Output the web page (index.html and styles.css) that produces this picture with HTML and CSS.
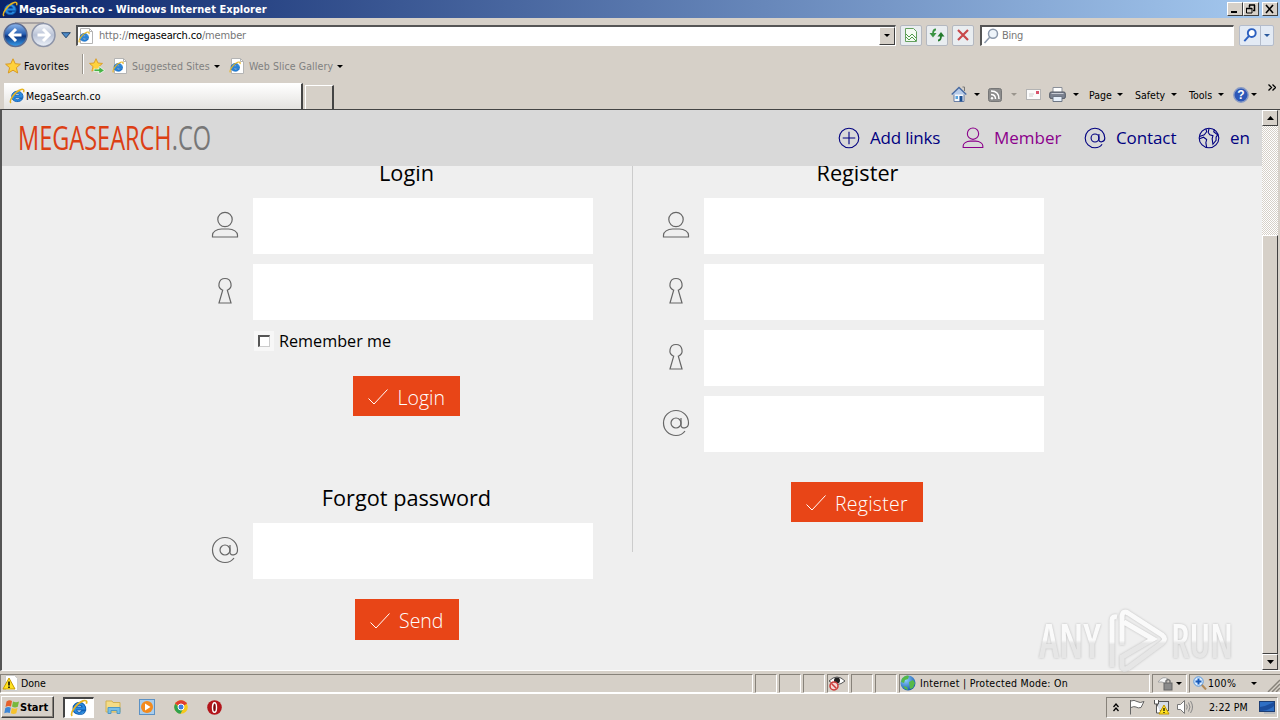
FILE: index.html
```html
<!DOCTYPE html>
<html lang="en">
<head>
  <meta charset="UTF-8">
  <title>MegaSearch.co</title>
  <link rel="stylesheet" href="styles.css">
</head>
<body>

  <!-- shared icons -->
  <svg class="defs" width="0" height="0">
    <defs>
      <linearGradient id="gBack" x1="0" y1="0" x2="0" y2="1"><stop offset="0" stop-color="#8fb9ee"/><stop offset=".45" stop-color="#2b62b4"/><stop offset=".55" stop-color="#0d3580"/><stop offset="1" stop-color="#38a0f0"/></linearGradient>
      <linearGradient id="gFwd" x1="0" y1="0" x2="0" y2="1"><stop offset="0" stop-color="#f4f6fa"/><stop offset=".5" stop-color="#b9c2d6"/><stop offset="1" stop-color="#eef3fa"/></linearGradient>
      <radialGradient id="gGlobe" cx=".35" cy=".3" r=".8"><stop offset="0" stop-color="#8fd0ff"/><stop offset="1" stop-color="#0b4fa8"/></radialGradient>
      <linearGradient id="gMark" x1="0" y1="0" x2="0" y2="1"><stop offset=".5" stop-color="#fafafa"/><stop offset=".55" stop-color="#e6e6e6"/></linearGradient>
    </defs>
    <symbol id="ie" viewBox="0 0 16 16">
      <path d="M14 9.800H5.800c.4 2.200 3.600 2.600 4.700.7h3.200c-1.600 4.600-11.200 4.300-11-2.200C2.900 1.500 14.600 1 14 9.800zM5.800 7.200h4.900c-.2-2.200-4.600-2.200-4.900 0z" fill="#2a8be0" stroke="#0f5fb4" stroke-width=".9"/>
      <path d="M2 15c-2.500-2 3.500-11 9.500-13.300C14 .8 15.600 1.600 14.500 4.200" fill="none" stroke="#e6b422" stroke-width="1.500"/>
    </symbol>
    <symbol id="iepage" viewBox="0 0 16 16">
      <path d="M2.500.5h9l3 3v12h-12z" fill="#fff" stroke="#b4b4b4"/>
      <path d="M11.500.5v3h3" fill="none" stroke="#b4b4b4"/>
      <svg x="0" y="3" width="12" height="12"><use href="#ie"/></svg>
    </symbol>
    <symbol id="star" viewBox="0 0 16 16">
      <path d="M8 .8l2.200 4.900 5.200.5-4 3.500 1.300 5.300L8 12.200 3.300 15l1.300-5.300-4-3.500 5.200-.5z" fill="#ffd23c" stroke="#d99a22"/>
    </symbol>
    <symbol id="down" viewBox="0 0 6 3"><path d="M0 0h6L3 3z" fill="currentColor"/></symbol>
    <symbol id="user" viewBox="0 0 28 28">
      <circle cx="14" cy="8.500" r="7.200"/><path d="M1.500 26v-2c0-3 4-6 9-6h7c5 0 9 3 9 6v2z"/>
    </symbol>
    <symbol id="key" viewBox="0 0 28 28">
      <path d="M11.700 13.200C5.500 10.500 7.500 1.500 14 1.500s8.500 9 2.300 11.700L20 26H8z"/>
    </symbol>
    <symbol id="at" viewBox="0 0 28 28">
      <circle cx="14" cy="14" r="5"/><path d="M19 9v7.500c0 3.500 7.500 3.500 7.500-2.500C26.500 7 21 1.500 14 1.500S1.500 7 1.500 14 7 26.500 14 26.500c4 0 7-1.500 9-4.500"/>
    </symbol>
    <symbol id="plus" viewBox="0 0 28 28">
      <circle cx="14" cy="14" r="12.500"/><path d="M14 6v16M6 14h16"/>
    </symbol>
    <symbol id="globe" viewBox="0 0 28 28">
      <circle cx="14" cy="14" r="12.500"/><path d="M10 2.500l1 3.500-3 4-6 2M2 15l5-2 4 3-1 4 1 6M14 2l-1 5 2 3 4 1-1 4 1 7 4-5v-4l2-3-5-4 1-3"/>
    </symbol>
    <symbol id="check" viewBox="0 0 20 16"><path d="M.5 9.500L6 15 19.500.5"/></symbol>
    <symbol id="lens" viewBox="0 0 16 16"><circle cx="10" cy="5.800" r="4.500"/><path d="M6.700 9.300L1.500 15"/></symbol>
  </svg>

  <div class="titlebar">
    <svg class="i16"><use href="#ie"/></svg>
    <span class="title">MegaSearch.co - Windows Internet Explorer</span>
    <div class="winbtns">
      <b><svg width="12" height="10"><path d="M2 8h6" stroke="#000" stroke-width="2"/></svg></b>
      <b><svg width="12" height="10"><path d="M4 1h6M4.500 1v2.500M9.500 1v5.500H8M1 4.500h6" stroke="#000" stroke-width="1.500" fill="none"/><path d="M1.500 4v5h5.500V4" stroke="#000" fill="none"/></svg></b>
      <b class="close"><svg width="12" height="10"><path d="M2 1l7 8M9 1L2 9" stroke="#000" stroke-width="1.600"/></svg></b>
    </div>
  </div>

  <div class="navbar">
    <svg class="arrows" width="56" height="28" viewBox="0 0 56 28">
      <path d="M14 2h29" stroke="#a9a4a4" stroke-width="2"/>
      <circle cx="14.500" cy="14" r="11.500" fill="url(#gBack)" stroke="#5c6c92" stroke-width="1.500"/>
      <path d="M15 8L9 14l6 6M10 14h10.500" stroke="#fff" stroke-width="3" fill="none"/>
      <circle cx="42.500" cy="14" r="11.500" fill="url(#gFwd)" stroke="#8d94a8" stroke-width="1.500"/>
      <path d="M42 8l6 6-6 6M47 14H36.500" stroke="#fff" stroke-width="3" fill="none"/>
    </svg>
    <svg class="recent" width="10" height="7"><path d="M.7.7h8.600L5 5.800z" fill="#4d8ac8" stroke="#21456f"/></svg>
    <div class="address">
      <svg class="i16"><use href="#iepage"/></svg>
      <span class="url">http://<em>megasearch.co</em>/member</span>
      <i class="drop"><svg class="arr"><use href="#down"/></svg></i>
    </div>
    <div class="tool"><svg width="14" height="16" viewBox="0 0 14 16"><path d="M1.500 1.500h8l3 3v10h-11z" fill="#f4fbf2" stroke="#64a05e"/><path d="M2 7l3 3 3-3 4 4M2 10l3 3 3-3 4 4" stroke="#4f9b4a" fill="none"/></svg></div>
    <div class="tool"><svg width="16" height="14" viewBox="0 0 16 14"><path d="M7 1.500C4.500 1.500 4 3 4 6" stroke="#3c9444" stroke-width="1.800" fill="none"/><path d="M.5 5h7L4 9.500z" fill="#3c9444"/><path d="M9 12.500c2.500 0 3-1.500 3-4.500" stroke="#237a2c" stroke-width="1.800" fill="none"/><path d="M8.500 8.500h7L12 4z" fill="#237a2c"/></svg></div>
    <div class="tool"><svg width="12" height="12" viewBox="0 0 12 12"><path d="M1 1l10 10M11 1L1 11" stroke="#c8484a" stroke-width="2.200"/></svg></div>
    <div class="search">
      <svg class="i16 lens"><use href="#lens"/></svg>
      <span>Bing</span>
    </div>
    <div class="go">
      <svg class="i14 lens-blue"><use href="#lens"/></svg>
      <i></i>
      <svg class="arr blue"><use href="#down"/></svg>
    </div>
  </div>

  <div class="favbar">
    <svg class="i16"><use href="#star"/></svg>
    <span class="fav">Favorites</span>
    <i class="sep"></i>
    <svg class="i16 addfav" viewBox="0 0 16 16"><use href="#star" width="14" height="14"/><path d="M5 11h5V8.500l5.500 4-5.500 3.500v-2.500H5z" fill="#46b545" stroke="#fff" stroke-width=".7"/></svg>
    <svg class="i16 p1"><use href="#iepage"/></svg>
    <span class="link sug">Suggested Sites</span>
    <svg class="arr"><use href="#down"/></svg>
    <svg class="i16 p2"><use href="#iepage"/></svg>
    <span class="link web">Web Slice Gallery</span>
    <svg class="arr"><use href="#down"/></svg>
  </div>

  <div class="tabs">
    <div class="tab"><svg class="i16"><use href="#ie"/></svg><span>MegaSearch.co</span></div>
    <div class="newtab"></div>
    <div class="commands">
      <svg width="16" height="17" viewBox="0 0 16 17"><path d="M3 8v7.500h10V8" fill="#f6f8fc" stroke="#6a7fa5"/><path d="M.7 8.500L8 1.500l7.300 7" fill="#b7cbe8" stroke="#4769a0" stroke-width="1.400"/><path d="M11.500 1h2v4" stroke="#777" fill="none"/><path d="M8.500 10h3v5.500h-3z" fill="#1c4f92"/><path d="M4.500 10h2.500v3H4.500z" fill="#58a3dc"/></svg>
      <svg class="arr a1"><use href="#down"/></svg>
      <svg class="rss" width="14" height="14" viewBox="0 0 14 14"><rect x=".5" y=".5" width="13" height="13" rx="2" fill="#8d8d8d" stroke="#777"/><path d="M3 3c5 0 8 3 8 8M3 6.500c3 0 4.500 1.500 4.500 4.500" stroke="#fff" stroke-width="1.500" fill="none"/><circle cx="4" cy="10.300" r="1.200" fill="#fff"/></svg>
      <svg class="arr a2"><use href="#down"/></svg>
      <svg class="mail" width="15" height="11" viewBox="0 0 15 11"><rect x=".5" y=".5" width="14" height="10" fill="#fbfbfb" stroke="#b3b3b3"/><path d="M3 5h5M3 7h4" stroke="#ccc"/><path d="M10 2h3v3h-3z" fill="#d8536c"/></svg>
      <svg class="print" width="17" height="15" viewBox="0 0 17 15"><path d="M4 .5h9v6H4z" fill="#fff" stroke="#8a8f98"/><rect x=".7" y="5" width="15.600" height="6.500" rx="1.500" fill="#7c8290" stroke="#535965"/><path d="M2.500 6.500h12" stroke="#c8ccd4"/><path d="M4 9.500h9v5H4z" fill="#e7f0fb" stroke="#6d7684"/></svg>
      <svg class="arr a3"><use href="#down"/></svg>
      <span class="m1">Page</span><svg class="arr"><use href="#down"/></svg>
      <span class="m2">Safety</span><svg class="arr"><use href="#down"/></svg>
      <span class="m3">Tools</span><svg class="arr"><use href="#down"/></svg>
      <svg class="help" width="16" height="16" viewBox="0 0 16 16"><circle cx="8" cy="8" r="7.200" fill="#2e58b8" stroke="#8b9cc4" stroke-width="1.400"/><text x="8" y="12.200" text-anchor="middle" class="q">?</text></svg>
      <svg class="arr a4"><use href="#down"/></svg>
      <svg class="more" width="8" height="7"><path d="M.5.500l3 3-3 3M4.500.500l3 3-3 3" stroke="#000" stroke-width="1.300" fill="none"/></svg>
    </div>
  </div>

  <div class="viewport">
    <div class="page">
      <header>
        <svg class="logo" width="200" height="50">
          <text x="0" y="37" textLength="193" lengthAdjust="spacingAndGlyphs">MEGASEARCH<tspan>.CO</tspan></text>
        </svg>
        <nav>
          <a><svg><use href="#plus"/></svg><span class="w1">Add links</span></a>
          <a class="active"><svg><use href="#user"/></svg><span class="w2">Member</span></a>
          <a><svg><use href="#at"/></svg><span class="w3">Contact</span></a>
          <a><svg><use href="#globe"/></svg><span class="w4">en</span></a>
        </nav>
      </header>
      <main>
        <section class="left">
          <h2>Login</h2>
          <label class="row"><svg><use href="#user"/></svg><input type="text"></label>
          <label class="row"><svg><use href="#key"/></svg><input type="password"></label>
          <div class="remember"><span class="box"><i></i></span><span>Remember me</span></div>
          <button class="login"><svg><use href="#check"/></svg>Login</button>
          <h2 class="forgot">Forgot password</h2>
          <label class="row"><svg><use href="#at"/></svg><input type="text"></label>
          <button class="send"><svg><use href="#check"/></svg>Send</button>
        </section>
        <div class="divider"></div>
        <section class="right">
          <h2>Register</h2>
          <label class="row"><svg><use href="#user"/></svg><input type="text"></label>
          <label class="row"><svg><use href="#key"/></svg><input type="password"></label>
          <label class="row"><svg><use href="#key"/></svg><input type="password"></label>
          <label class="row"><svg><use href="#at"/></svg><input type="text"></label>
          <button class="register"><svg><use href="#check"/></svg>Register</button>
        </section>
      </main>
    </div>
    <div class="scrollbar">
      <b><svg width="7" height="4"><path d="M0 4h7L3.500 0z"/></svg></b>
      <div class="thumb"></div>
      <b><svg width="7" height="4"><path d="M0 0h7L3.500 4z"/></svg></b>
    </div>
    <svg class="watermark" width="210" height="70" viewBox="0 0 210 70">
      <text x="8" y="51" textLength="62" lengthAdjust="spacingAndGlyphs">ANY</text>
      <path d="M81 60V13q0-4 5-3" class="edge"/>
      <path d="M91 38V9q1-6 6-3l34 22q5 4 0 8L97 61q-6 3-6-3v-8l31-18-29-17" class="edge"/>
      <text x="140" y="51" textLength="62" lengthAdjust="spacingAndGlyphs">RUN</text>
    </svg>
  </div>

  <div class="statusbar">
    <div class="cell done">
      <svg class="i16" viewBox="0 0 16 16"><path d="M3.500.5h9l3 3v12h-12z" fill="#fff" stroke="#ccc"/><path d="M7 3l6 11H1z" fill="#ffe21f" stroke="#c89a00"/><path d="M7 6.500v4M7 11.500v1.500" stroke="#000" stroke-width="1.500"/></svg>
      <span>Done</span>
    </div>
    <div class="cell s"></div>
    <div class="cell s"></div>
    <div class="cell s"></div>
    <div class="cell s"><svg width="18" height="16" viewBox="0 0 18 16"><path d="M1 6q8-8 16 0-8 7-16 0z" fill="#fff" stroke="#555"/><circle cx="9" cy="5.500" r="3" fill="#222"/><circle cx="6" cy="11" r="4" fill="#f3d5d3" stroke="#cc3b38" stroke-width="1.500"/><path d="M3.500 8.500l5 5" stroke="#cc3b38" stroke-width="1.500"/></svg></div>
    <div class="cell s"></div>
    <div class="cell s"></div>
    <div class="cell zone">
      <svg class="i16" viewBox="0 0 16 16"><circle cx="8" cy="8" r="7.500" fill="url(#gGlobe)"/><path d="M2 3.500q4-4 7-2.500l-1 3-3 1-1 3-3-1zM9 7l4-2 2 3-2 5-3 1zM3 11l4 1 1 3-3-1z" fill="#55b948"/></svg>
      <span>Internet | Protected Mode: On</span>
    </div>
    <div class="cell lock">
      <svg class="i16" viewBox="0 0 16 16"><path d="M1 7q5-7 10-3l-2 5-4-2z" fill="#f6f6f6" stroke="#a4a4a4"/><rect x="7" y="8" width="8" height="7" fill="#8b8b8b" stroke="#666"/><path d="M9 8V6q2-3 4 0v2" fill="none" stroke="#777" stroke-width="1.500"/></svg>
      <svg class="arr"><use href="#down"/></svg>
    </div>
    <div class="cell zoom">
      <svg class="i14" viewBox="0 0 14 14"><path d="M8 8l5 5.500" stroke="#b18a5a" stroke-width="2"/><circle cx="5.500" cy="5.500" r="4.700" fill="#d8ebff" stroke="#5796dd"/><path d="M5.500 2.500v6M2.500 5.500h6" stroke="#1658b8" stroke-width="2"/></svg>
      <span>100%</span>
      <svg class="arr"><use href="#down"/></svg>
      <svg class="grip" width="13" height="13"><path d="M1 13L13 1M5 13l8-8M9 13l4-4" stroke="#87827a" stroke-width="1.500"/></svg>
    </div>
  </div>

  <div class="taskbar">
    <div class="start">
      <svg class="i16" viewBox="0 0 16 16"><path d="M2.500 2.500q3-2 5.500-.5l-1 5.500q-3-1-5.500.5z" fill="#e5602b"/><path d="M9 2.500q3 1.500 6 0l-1.200 5.300q-3 1.500-5.800-.200z" fill="#78b83d"/><path d="M1.300 9q3-1.700 5.500-.3L5.800 14q-2.800-1.300-5.500.300z" fill="#3c86d6"/><path d="M7.800 9q3 1.500 5.700 0l-1.200 5.200q-2.700 1.500-5.500 0z" fill="#f6c22c"/></svg>
      <span>Start</span>
    </div>
    <div class="task"><svg width="18" height="18"><use href="#ie"/></svg></div>
    <svg class="q1" width="17" height="16" viewBox="0 0 17 16"><path d="M1 2h6l1 1.500h7V13H1z" fill="#f4dc86" stroke="#d1b152"/><path d="M3 8.500h12v6h-3v-3H6v3H3z" fill="#79bfe6" stroke="#5099c4"/></svg>
    <svg class="q2" width="16" height="16" viewBox="0 0 16 16"><rect x=".5" y=".5" width="15" height="15" fill="#a9cdec" stroke="#5c91c4"/><circle cx="8" cy="8" r="6" fill="#f38a1d"/><path d="M6 4.500L11.500 8 6 11.500z" fill="#fff"/></svg>
    <svg class="q3" width="14" height="14" viewBox="0 0 14 14"><circle cx="7" cy="7" r="6.800" fill="#f6c91c"/><path d="M7 7L1 3.700Q3 .2 7 .2t6 3.500z" fill="#df3d31"/><path d="M1.100 3.700Q-1.500 9 3 12.500q1.500 1.200 3.500 1.300L9 9 6 8z" fill="#2fa14f"/><circle cx="7" cy="7" r="3" fill="#3f7fe0" stroke="#fff"/></svg>
    <svg class="q4" width="15" height="15" viewBox="0 0 15 15"><circle cx="7.500" cy="7.500" r="7.300" fill="#b3151b"/><ellipse cx="7.500" cy="7.500" rx="2" ry="4.800" fill="#7c0a0e" stroke="#fff" stroke-width="1.400"/></svg>
    <div class="tray">
      <svg class="chev" width="6" height="9"><path d="M.5 4l2.500-3 2.500 3M.5 8l2.500-3 2.500 3" stroke="#000" stroke-width="1.300" fill="none"/></svg>
      <svg class="flag" width="16" height="16" viewBox="0 0 16 16"><path d="M1.500 1v14.500M2 2q3-1.500 6 .5 3 2 7 0l-3 6q-3 1-5-.5-2-1-5 .5" fill="#fff" stroke="#666"/></svg>
      <svg class="net" width="17" height="16" viewBox="0 0 17 16"><rect x="4.500" y="2.500" width="11" height="9" fill="#d6dde6" stroke="#555"/><path d="M1.500 1v4h4V1M3.500 5v9H8" fill="#fff" stroke="#555"/><path d="M11 6l5 9H6z" fill="#ffe21f" stroke="#c29600"/><path d="M11 9v3M11 13v1" stroke="#000" stroke-width="1.200"/></svg>
      <svg class="vol" width="16" height="14" viewBox="0 0 16 14"><path d="M.5 4.500h3l4-4v13l-4-4h-3z" fill="#fff" stroke="#777"/><path d="M9.500 4.500q1.500 2.500 0 5M11.500 2.500q3 4.500 0 9M13.500 1q4 6 0 12" fill="none" stroke="#888"/></svg>
      <span>2:22 PM</span>
      <svg class="desk" width="17" height="14" viewBox="0 0 17 14"><rect x=".5" y="1.500" width="15" height="10" fill="#2f6fc4" stroke="#1d3e74"/><path d="M1 7q7-1 14-5v4q-6 5-14 5z" fill="#1c4e9d"/><path d="M5 13h11" stroke="#98a5b8"/></svg>
    </div>
  </div>

</body>
</html>
```
FILE: styles.css
```css
* {
  box-sizing: border-box;
}

body {
  margin: 0;
  width: 1280px;
  height: 720px;
  overflow: hidden;
  display: flex;
  flex-direction: column;
  background: #d6d0c8;
  font-family: "DejaVu Sans Condensed", "DejaVu Sans", sans-serif;
  font-stretch: condensed;
  font-size: 10.5px;
  color: #000;
}

svg {
  flex: none;
  display: block;
}

.defs {
  position: absolute;
}

span {
  white-space: nowrap;
}

.i16 {
  width: 16px;
  height: 16px;
}

.i14 {
  width: 14px;
  height: 14px;
}

.arr {
  width: 6px;
  height: 3px;
}

/* title bar */
.titlebar {
  height: 18px;
  flex: none;
  display: flex;
  align-items: center;
  padding: 0 2px;
  background: linear-gradient(to right, #0a246a, #a6caf0);
}

.title {
  color: #fff;
  font-weight: bold;
  font-size: 11px;
  letter-spacing: 0.05px;
  margin-left: 1px;
}

.winbtns {
  display: flex;
  margin-left: auto;
}

.winbtns b {
  width: 16px;
  height: 14px;
  padding: 1px;
  background: #d6d0c8;
  border: 1px solid;
  border-color: #fff #404040 #404040 #fff;
}

.winbtns .close {
  margin-left: 3px;
}

/* address row */
.navbar {
  height: 34px;
  flex: none;
  display: flex;
  align-items: center;
  padding-left: 1px;
}

.recent {
  margin-left: 4px;
}

.address {
  width: 820px;
  height: 21px;
  margin: 0 4px 0 5px;
  display: flex;
  align-items: center;
  background: #fff;
  border: 1px solid #555;
  border-width: 2px 1px 1px 2px;
  border-color: #555 #fff #fff #555;
}

.url {
  margin-left: 5px;
  color: #777;
  font-size: 11px;
  letter-spacing: -0.15px;
}

.url em {
  font-style: normal;
  color: #000;
}

.drop {
  width: 16px;
  height: 18px;
  margin-left: auto;
  display: flex;
  align-items: center;
  justify-content: center;
  background: #d6d0c8;
  border: 1px solid;
  border-color: #fff #404040 #404040 #fff;
}

.tool {
  width: 22px;
  height: 21px;
  margin-right: 4px;
  display: flex;
  align-items: center;
  justify-content: center;
  background: #e9edf0;
  border: 1px solid #b4b8c0;
  border-radius: 2px;
}

.search {
  width: 254px;
  height: 21px;
  margin-left: 2px;
  display: flex;
  align-items: center;
  background: #fff;
  border: 1px solid #fff;
  border-width: 2px 1px 1px 2px;
  border-color: #555 #fff #fff #555;
  color: #777;
  font-size: 11px;
  letter-spacing: -0.3px;
}

.lens {
  margin: 0 3px 0 1px;
  fill: #eef4fa;
  stroke: #8b98ab;
  stroke-width: 1.5;
}

.go {
  width: 35px;
  height: 21px;
  margin-left: 5px;
  display: flex;
  align-items: center;
  background: #e3eaf4;
  border: 1px solid #b4bccb;
  border-radius: 2px;
}

.go i {
  width: 1px;
  height: 19px;
  margin: 0 3px;
  background: #b4bccb;
}

.lens-blue {
  margin-left: 3px;
  fill: #fff;
  stroke: #2b5fc0;
  stroke-width: 2.2;
}

.blue {
  color: #2c5a9d;
}

/* favorites row */
.favbar {
  height: 28px;
  flex: none;
  display: flex;
  align-items: center;
  padding-left: 5px;
  letter-spacing: 0.1px;
}

.fav {
  width: 45px;
  margin-left: 3px;
  letter-spacing: 0.3px;
}

.sep {
  width: 2px;
  height: 20px;
  margin: -4px 5px 0 13px;
  border-left: 1px solid #99948c;
  border-right: 1px solid #fff;
}

.link {
  color: #808080;
  margin-left: 4px;
}

.p1 {
  margin-left: 7px;
}

.sug {
  width: 78px;
  margin-right: 4px;
}

.p2 {
  margin-left: 9px;
}

.web {
  width: 83px;
  margin-right: 5px;
}

/* tab row */
.tabs {
  height: 29px;
  flex: none;
  display: flex;
  align-items: flex-end;
  padding-left: 4px;
}

.tab {
  width: 299px;
  height: 26px;
  display: flex;
  align-items: center;
  padding: 0 0 2px 5px;
  background: linear-gradient(#fff, #e4e2df);
  border-right: 2px solid #444;
  border-top: 1px solid #fff;
}

.tab span {
  margin-left: 1px;
  letter-spacing: 0.2px;
}

.newtab {
  width: 29px;
  height: 24px;
  margin-left: 2px;
  border: 1px solid #fff;
  border-bottom: 0;
  border-right: 2px solid #444;
}

.commands {
  height: 29px;
  flex: 1;
  display: flex;
  align-items: center;
  padding-left: 617px;
}

.a1 {
  margin-left: 7px;
}

.rss {
  margin-left: 8px;
}

.a2 {
  margin-left: 9px;
  color: #9a958d;
}

.mail {
  margin-left: 9px;
}

.print {
  margin-left: 8px;
}

.a3 {
  margin-left: 7px;
}

.m1 {
  width: 25px;
  margin: 0 3px 0 10px;
}

.m2 {
  width: 33px;
  margin: 0 3px 0 12px;
}

.m3 {
  width: 26px;
  margin: 0 3px 0 12px;
}

.help {
  margin-left: 9px;
}

.q {
  font: bold 12px "Liberation Sans", sans-serif;
  fill: #fff;
}

.a4 {
  margin-left: 2px;
}

.more {
  margin: -14px 0 0 11px;
}

/* browser viewport */
.viewport {
  height: 562px;
  flex: none;
  position: relative;
  display: flex;
  border-left: 2px solid #555;
  border-top: 1px solid #444;
  border-bottom: 1px solid #fff;
}

.page {
  width: 1260px;
  display: flex;
  flex-direction: column;
  overflow: hidden;
  background: #efefef;
  font-family: "Open Sans", sans-serif;
  font-stretch: normal;
}

header {
  height: 56px;
  flex: none;
  display: flex;
  align-items: center;
  padding: 0 12px 0 16px;
  background: #d9d9d9;
}

.logo {
  overflow: visible;
}

.logo text {
  font-family: "Open Sans", sans-serif;
  font-size: 32px;
  fill: #dc3f14;
}

.logo tspan {
  fill: #777;
}

nav {
  display: flex;
  gap: 23px;
  margin-left: auto;
}

nav a {
  display: flex;
  align-items: center;
  gap: 10px;
  font-size: 17px;
  color: #000080;
}

nav svg {
  width: 22px;
  height: 22px;
  fill: none;
  stroke: #000080;
  stroke-width: 1.4;
}

nav span {
  margin-top: -1px;
}

.w1 {
  width: 69px;
  letter-spacing: -0.2px;
}

.w2 {
  width: 67px;
}

.w3 {
  width: 59px;
  letter-spacing: -0.1px;
}

.w4 {
  width: 20px;
}

nav .active {
  color: #8b008b;
}

nav .active svg {
  stroke: #8b008b;
}

/* member forms */
main {
  height: 504px;
  display: flex;
  padding-left: 198px;
  overflow: hidden;
}

section {
  width: 412px;
  margin-top: -8px;
}

h2 {
  margin: 0 0 10px;
  font-size: 21.7px;
  font-weight: normal;
  line-height: 30px;
  text-align: center;
  text-indent: 1px;
}

.row {
  display: flex;
  align-items: center;
  margin-bottom: 10px;
}

.row svg {
  width: 28px;
  height: 28px;
  margin: -2px 14px 0 11px;
  fill: none;
  stroke: #666;
  stroke-width: 1.2;
}

.row input {
  width: 340px;
  height: 56px;
  padding: 0 10px;
  background: #fff;
  border: 0;
}

.remember {
  height: 22px;
  display: flex;
  align-items: center;
  margin-left: 54px;
  font-size: 16.2px;
}

.box {
  width: 20px;
  height: 20px;
  margin-right: 5px;
  padding: 4px;
  background: #f7f7f7;
}

.box i {
  display: block;
  width: 12px;
  height: 12px;
  background: #fff;
  border: 1px solid #ccc;
  border-width: 2px 1px 1px 2px;
  border-color: #555 #ccc #ccc #555;
}

button {
  display: flex;
  align-items: center;
  height: 40px;
  margin: 0 auto;
  padding: 2px 0 0 15px;
  background: #e84517;
  border: 0;
  color: #fff;
  font-family: "Open Sans", sans-serif;
  font-size: 19.5px;
  font-weight: 300;
}

button svg {
  width: 20px;
  height: 16px;
  margin-right: 9px;
  fill: none;
  stroke: #fff;
}

.login {
  width: 107px;
  margin-top: 24px;
}

.login svg {
  margin-right: 10px;
}

.forgot {
  margin-top: 67px;
}

.send {
  width: 104px;
  height: 41px;
  margin: 20px 0 0 155px;
}

.divider {
  width: 1px;
  height: 386px;
  margin: 0 18px 0 20px;
  background: #ccc;
}

.register {
  width: 132px;
  margin-top: 30px;
  letter-spacing: 0.25px;
}

/* scrollbar */
.scrollbar {
  width: 16px;
  display: flex;
  flex-direction: column;
  background: repeating-conic-gradient(#fff 0 25%, #d6d0c8 0 50%) 0 0 / 2px 2px;
}

.scrollbar b {
  height: 16px;
  flex: none;
  display: flex;
  align-items: center;
  justify-content: center;
  background: #d6d0c8;
  border: 1px solid;
  border-color: #fff #404040 #404040 #fff;
}

.thumb {
  flex: 1;
  margin-top: 109px;
  background: #d6d0c8;
  border: 1px solid;
  border-color: #fff #404040 #404040 #fff;
}

.watermark {
  position: absolute;
  left: 1029px;
  top: 497px;
}

.watermark text {
  font-family: "Open Sans", sans-serif;
  font-size: 46px;
  font-weight: 600;
  fill: url(#gMark);
  filter: drop-shadow(0 0 1px #bbb);
}

.edge {
  fill: none;
  stroke: url(#gMark);
  stroke-width: 5;
  filter: drop-shadow(0 0 1px #bbb);
}

/* status bar */
.statusbar {
  height: 22px;
  flex: none;
  display: flex;
  gap: 2px;
  padding-top: 2px;
  margin-top: 1px;
  border-bottom: 1px solid #fff;
}

.cell {
  display: flex;
  align-items: center;
  padding-bottom: 1px;
  border: 1px solid;
  border-color: #87827a #fff #fff #87827a;
}

.done {
  width: 753px;
  padding-left: 1px;
}

.done span {
  margin-left: 3px;
}

.s {
  width: 22px;
}

.zone {
  width: 251px;
}

.zone span {
  margin-left: 4px;
  letter-spacing: 0.27px;
}

.lock {
  width: 35px;
  padding-left: 4px;
}

.lock .arr {
  margin-left: 3px;
}

.zoom {
  flex: 1;
  padding-left: 3px;
  border-right: 0;
}

.zoom span {
  width: 30px;
  margin: 0 13px 0 1px;
  letter-spacing: 0.3px;
}

.grip {
  margin: 5px 0 0 auto;
}

/* taskbar */
.taskbar {
  flex: 1;
  display: flex;
  align-items: center;
}

.start {
  width: 53px;
  height: 22px;
  margin-left: 1px;
  display: flex;
  align-items: center;
  padding-left: 2px;
  border: 1px solid;
  border-color: #fff #404040 #404040 #fff;
  box-shadow: inset -1px -1px #87827a;
  font-weight: bold;
  font-size: 11px;
}

.task {
  width: 31px;
  height: 21px;
  margin-left: 9px;
  display: flex;
  align-items: center;
  justify-content: center;
  background: #fff;
  border: 1px solid;
  border-width: 2px 1px 1px 2px;
  border-color: #444 #fff #fff #444;
}

.q1 {
  margin-left: 11px;
}

.q2 {
  margin-left: 17px;
}

.q3 {
  margin-left: 19px;
}

.q4 {
  margin-left: 19px;
}

.tray {
  width: 172px;
  height: 21px;
  margin-left: auto;
  margin-right: 2px;
  display: flex;
  align-items: center;
  padding-left: 6px;
  border: 1px solid;
  border-color: #87827a #fff #fff #87827a;
}

.flag {
  margin-left: 10px;
}

.net {
  margin-left: 8px;
}

.vol {
  margin-left: 7px;
}

.tray span {
  width: 39px;
  margin-left: 16px;
  letter-spacing: 0.1px;
}

.desk {
  margin-left: 11px;
}
```
